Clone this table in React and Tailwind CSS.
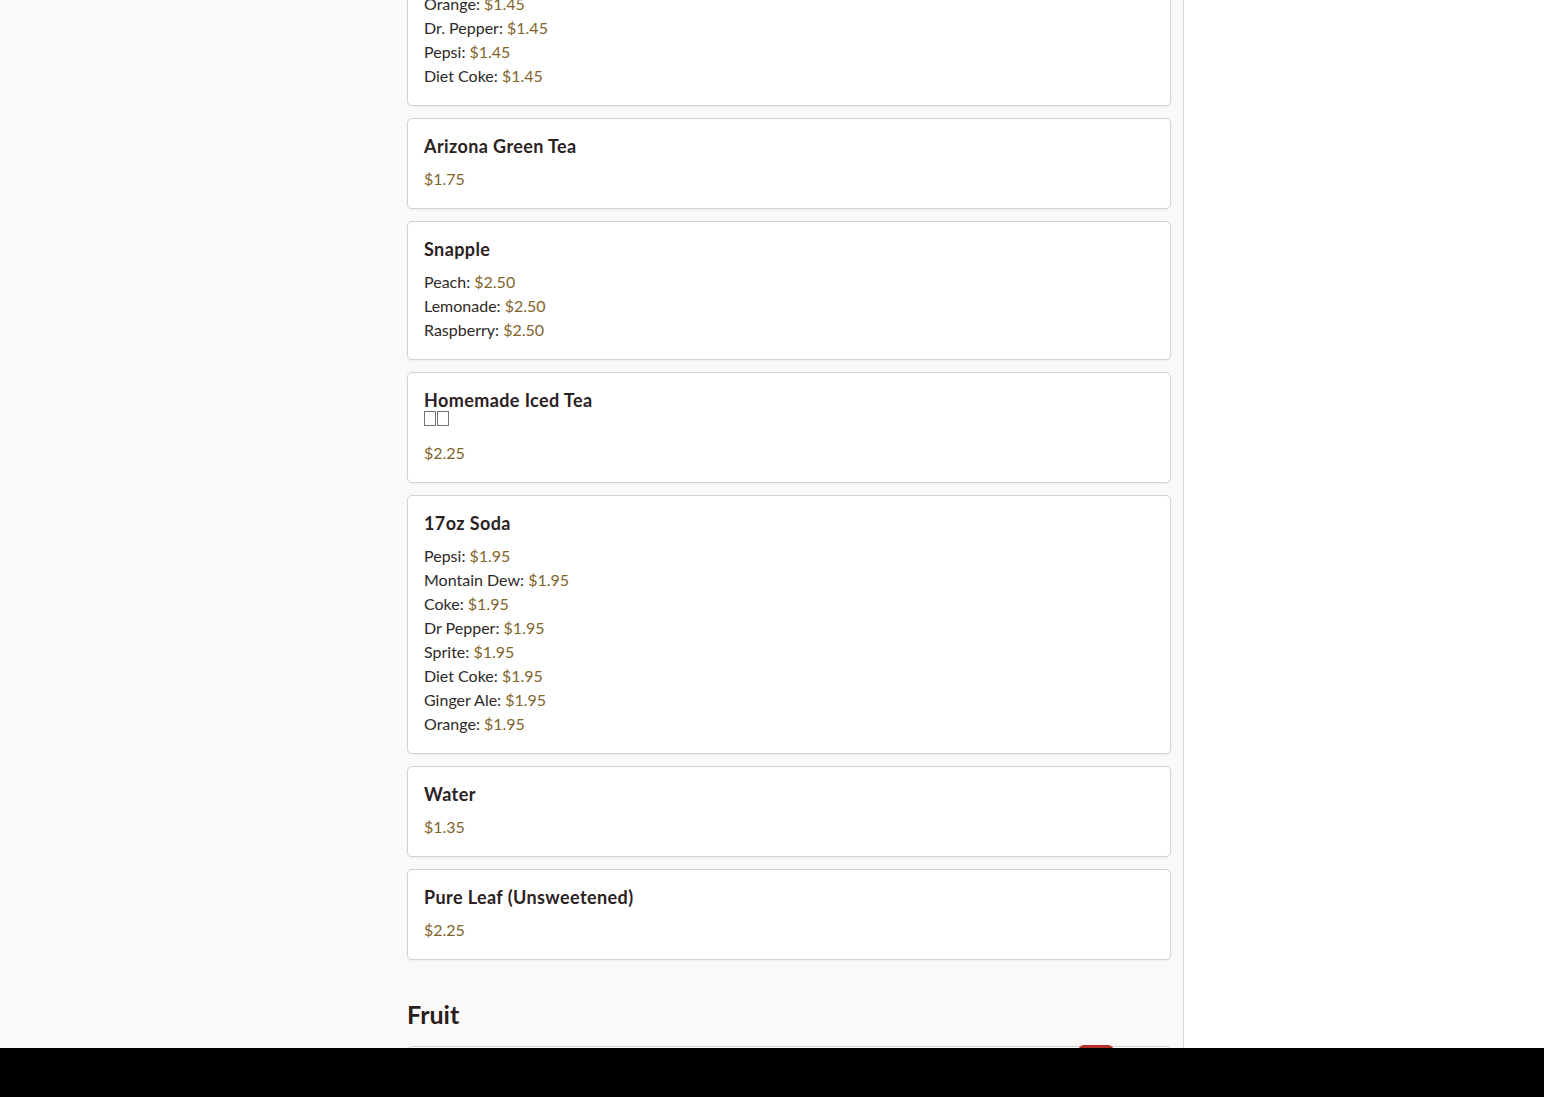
import React from 'react';

const font = { fontFamily: '"Lato", "Noto Sans", sans-serif' };

const sections = [
    {
        id: 'soda20',
        items: [
            ['Orange', '$1.45'],
            ['Dr. Pepper', '$1.45'],
            ['Pepsi', '$1.45'],
            ['Diet Coke', '$1.45'],
        ],
    },
    { id: 'arizona', name: 'Arizona Green Tea', price: '$1.75' },
    {
        id: 'snapple',
        name: 'Snapple',
        items: [
            ['Peach', '$2.50'],
            ['Lemonade', '$2.50'],
            ['Raspberry', '$2.50'],
        ],
    },
    { id: 'icedtea', name: 'Homemade Iced Tea', tofu: true, price: '$2.25' },
    {
        id: 'soda17',
        name: '17oz Soda',
        items: [
            ['Pepsi', '$1.95'],
            ['Montain Dew', '$1.95'],
            ['Coke', '$1.95'],
            ['Dr Pepper', '$1.95'],
            ['Sprite', '$1.95'],
            ['Diet Coke', '$1.95'],
            ['Ginger Ale', '$1.95'],
            ['Orange', '$1.95'],
        ],
    },
    { id: 'water', name: 'Water', price: '$1.35' },
    { id: 'pureleaf', name: 'Pure Leaf (Unsweetened)', price: '$2.25' },
];

const Price = ({ children }) => <span className="text-[#82652b]">{children}</span>;

const ItemCard = ({ item }) => (
    <div className="bg-white border border-[#d4d2cf] rounded-[5px] px-4 pt-4 pb-[17px] shadow-[0_1px_2px_rgba(0,0,0,0.05)]">
        {item.name && (
            <div className="mb-[10px]">
                <h3 className="text-[18px] leading-[22px] font-bold tracking-[0.4px] text-[#2b211f]">{item.name}</h3>
                {item.tofu && (
                    <div className="h-[20px] flex items-start gap-[1px]">
                        <span className="inline-block w-[12px] h-[15px] border border-[#77716e]" />
                        <span className="inline-block w-[12px] h-[15px] border border-[#77716e]" />
                    </div>
                )}
            </div>
        )}
        {item.price && <p className="text-base leading-6"><Price>{item.price}</Price></p>}
        {item.items && (
            <ul>
                {item.items.map(([label, price]) => (
                    <li key={label} className="text-base leading-6 text-[#2e2927]">
                        {label}: <Price>{price}</Price>
                    </li>
                ))}
            </ul>
        )}
    </div>
);

export default function App() {
    return (
        <div className="h-[1097px] overflow-hidden flex bg-white" style={font}>
            <aside className="w-[395px] shrink-0 bg-[#faf9f7]" />

            <main className="w-[789px] shrink-0 bg-[#faf9f7] border-r border-[#dcdad7] px-3">
                <div className="-mt-[25px] flex flex-col gap-[12px]">
                    {sections.map((s) => (
                        <ItemCard key={s.id} item={s} />
                    ))}
                </div>

                <h2 className="mt-[38px] mb-[16px] text-[25px] leading-[32px] font-bold text-[#2a1d1b]">Fruit</h2>

                <div className="relative bg-white border border-[#d4d2cf] rounded-[5px] h-[120px]">
                    <span className="absolute -top-[2px] right-[56px] w-[36px] h-[20px] rounded-t-[6px] bg-[#b3302c]" />
                </div>
            </main>

            <aside className="flex-1 bg-white" />

            {/* bottom bar */}
            <div className="fixed left-0 right-0 bottom-0 h-[49px] bg-black" />
        </div>
    );
}
